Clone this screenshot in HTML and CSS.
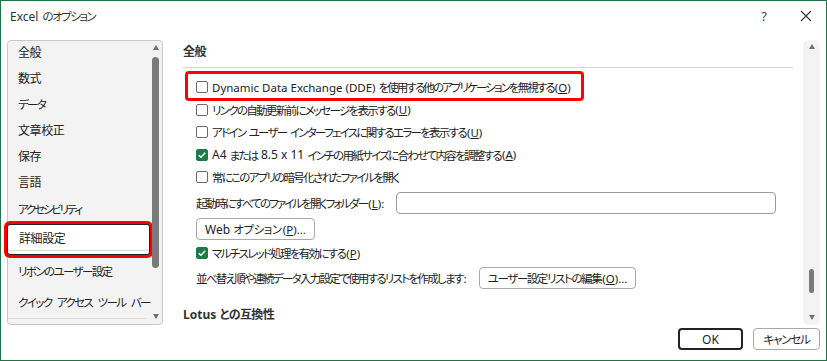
FILE: index.html
```html
<!DOCTYPE html>
<html lang="ja">
<head>
  <meta charset="UTF-8" />
  <title>Excel のオプション</title>
  <link rel="stylesheet" href="styles.css">
</head>
<body>
  <div class="dialog">
    <header class="titlebar">
      <span class="title"><span class="lat">Excel </span>のオプション</span>
      <div class="title-controls">
        <span class="help">?</span>
        <svg class="close" width="12" height="12" viewBox="0 0 12 12"><path d="M1 1L11 11M11 1L1 11" stroke="#333" stroke-width="1.1" fill="none"/></svg>
      </div>
    </header>

    <div class="main">
      <nav class="nav">
        <ul class="nav-list">
          <li class="nav-item">全般</li>
          <li class="nav-item">数式</li>
          <li class="nav-item kana">データ</li>
          <li class="nav-item">文章校正</li>
          <li class="nav-item">保存</li>
          <li class="nav-item">言語</li>
          <li class="nav-item kana tight">アクセシビリティ</li>
          <li class="nav-item selected">詳細設定</li>
          <li class="nav-item kana tall">リボンのユーザー設定</li>
          <li class="nav-item kana short last">クイック アクセス ツール バー</li>
        </ul>
        <div class="vscroll nav-scroll">
          <span class="arrow up"></span>
          <span class="thumb"></span>
          <span class="arrow down"></span>
        </div>
      </nav>

      <section class="pane">
        <div class="pane-body">
          <h2 class="section-title">全般</h2>
          <div class="options">
            <label class="row marked"><span class="check"></span><span class="lat">Dynamic Data Exchange (DDE) </span>を使用する他のアプリケーションを無視する<span class="key">(<u>O</u>)</span></label>
            <label class="row"><span class="check"></span>リンクの自動更新前にメッセージを表示する<span class="key">(<u>U</u>)</span></label>
            <label class="row"><span class="check"></span>アドイン ユーザー インターフェイスに関するエラーを表示する<span class="key">(<u>U</u>)</span></label>
            <label class="row"><span class="check on"></span><span class="lat">A4 </span>または <span class="lat">8.5 x 11 </span>インチの用紙サイズに合わせて内容を調整する<span class="key">(<u>A</u>)</span></label>
            <label class="row"><span class="check"></span>常にこのアプリの暗号化されたファイルを開く</label>
            <div class="row folder-row">
              <span class="field-label">起動時にすべてのファイルを開くフォルダー<span class="key">(<u>L</u>):</span></span>
              <span class="textbox"></span>
            </div>
            <div class="row button-row">
              <button class="btn web-btn"><span class="lat">Web </span>オプション<span class="key">(<u>P</u>)...</span></button>
            </div>
            <label class="row multi-row"><span class="check on"></span>マルチスレッド処理を有効にする<span class="key">(<u>P</u>)</span></label>
            <div class="row list-row">
              <span class="field-label">並べ替え順や連続データ入力設定で使用するリストを作成します<span class="key">:</span></span>
              <button class="btn list-btn">ユーザー設定リストの編集<span class="key">(<u>O</u>)...</span></button>
            </div>
          </div>
          <h2 class="section-title next"><span class="lat">Lotus </span>との互換性</h2>
        </div>
        <div class="vscroll pane-scroll">
          <span class="arrow up"></span>
          <span class="thumb"></span>
          <span class="arrow down"></span>
        </div>
      </section>
    </div>

    <footer class="actions">
      <button class="btn btn-default">OK</button>
      <button class="btn btn-cancel">キャンセル</button>
    </footer>
  </div>
</body>
</html>
```

FILE: styles.css
```css
body {
  margin: 0;
  background: #fff;
  font-family: 'Noto Sans', 'Noto Sans CJK JP', sans-serif;
  font-size: 12px;
  color: #222;
  font-feature-settings: "palt";
}
.lat {
  letter-spacing: 0;
  word-spacing: 0;
  font-size: 12px;
}
.key {
  letter-spacing: 0;
  word-spacing: 0;
  font-size: 11.5px;
  margin-left: 1px;
}
.dialog {
  width: 827px;
  height: 361px;
  box-sizing: border-box;
  border: 1px solid #217346;
  background: #fff;
  display: flex;
  flex-direction: column;
}
.titlebar {
  height: 30px;
  display: flex;
  align-items: center;
  justify-content: space-between;
  padding: 0 14px 0 9px;
}
.title {
  font-size: 11.5px;
  letter-spacing: -1.5px;
  color: #333;
  white-space: pre;
}
.title .lat {
  word-spacing: 1px;
}
.title-controls {
  display: flex;
  align-items: center;
  gap: 33px;
}
.help {
  font-size: 13px;
  color: #444;
}
.main {
  margin-top: 9px;
  height: 285px;
  display: flex;
}

/* left category list */
.nav {
  margin-left: 6px;
  width: 156px;
  box-sizing: border-box;
  border: 1px solid #c8c8c8;
  border-radius: 4px;
  background: #f3f3f3;
  display: flex;
}
.nav-list {
  list-style: none;
  margin: -1.5px 0 0;
  padding: 0;
  flex: 1;
  min-width: 0;
}
.nav-item {
  height: 26.2px;
  line-height: 26.2px;
  padding-left: 10px;
  white-space: nowrap;
  font-size: 12px;
  letter-spacing: -0.4px;
}
.nav-item.kana {
  font-size: 11.5px;
  letter-spacing: -1.6px;
  word-spacing: 4px;
}
.nav-item.tight {
  letter-spacing: -2.2px;
}
.nav-item.selected {
  height: 29px;
  line-height: 28px;
  margin: 1px 0 1px -1px;
  padding-left: 11px;
  background: #fff;
  border: 1px solid #222;
  border-radius: 3px;
  box-shadow: 0 0 0 3px #f00, inset 0 -3px 0 #fff, inset 0 -4px 0 #d8d8d8;
}
.nav-item.tall {
  height: 32px;
  line-height: 32px;
}
.nav-item.short {
  height: 30px;
  line-height: 30px;
}
.nav-item.last {
  border-bottom: 1px solid #dcdcdc;
  margin-right: 4px;
}

/* scrollbars */
.vscroll {
  display: flex;
  flex-direction: column;
  align-items: center;
}
.nav-scroll {
  width: 11px;
  padding-right: 1px;
}
.arrow {
  width: 0;
  height: 0;
  border-left: 3.5px solid transparent;
  border-right: 3.5px solid transparent;
}
.arrow.up {
  margin-top: 4px;
  border-bottom: 5px solid #707070;
}
.arrow.down {
  margin-top: auto;
  margin-bottom: 5px;
  border-top: 5px solid #707070;
}
.nav-scroll .thumb {
  margin-top: 7px;
  width: 7px;
  height: 211px;
  border-radius: 4px;
  background: #7a7a7a;
}
.pane-scroll {
  width: 17px;
  background: #f3f3f3;
  border-radius: 6px;
}
.pane-scroll .thumb {
  margin-top: auto;
  margin-bottom: 22px;
  width: 5px;
  height: 24px;
  border-radius: 3px;
  background: #7a7a7a;
}
.pane-scroll .arrow.down {
  margin-top: 0;
}

/* right options pane */
.pane {
  margin-left: 12px;
  margin-right: 6px;
  flex: 1;
  display: flex;
}
.pane-body {
  flex: 1;
  padding-left: 8px;
  padding-right: 10px;
}
.section-title {
  margin: 0;
  padding-top: 5px;
  line-height: 14px;
  font-size: 12px;
  font-weight: bold;
  letter-spacing: -0.6px;
  color: #333;
}
.section-title:first-child {
  padding-bottom: 8px;
  border-bottom: 1px solid #d4d4d4;
}
.section-title.next {
  margin-top: 12.5px;
}
.options {
  margin-top: 8px;
  padding-left: 13px;
}
.row {
  height: 22.5px;
  display: flex;
  align-items: center;
  white-space: pre;
  color: #222;
  font-size: 11.5px;
  letter-spacing: -1.7px;
  word-spacing: 2px;
}
.row.marked {
  position: relative;
  letter-spacing: -1.9px;
}
.row.marked .lat {
  font-size: 11.5px;
}
.row.marked::after {
  content: "";
  position: absolute;
  left: -11px;
  top: -5px;
  width: 399px;
  height: 30px;
  box-sizing: border-box;
  border: 3px solid #f00;
  border-radius: 4px;
}
.check {
  width: 12px;
  height: 12px;
  box-sizing: border-box;
  border: 1px solid #6a6a6a;
  border-radius: 2px;
  margin-right: 4px;
  flex: none;
  background: #fff;
}
.check.on {
  border-color: #1e7a46;
  background: #1e7a46 url("data:image/svg+xml,%3Csvg xmlns='http://www.w3.org/2000/svg' viewBox='0 0 12 12'%3E%3Cpath d='M2.8 6.2L5 8.3L9.2 3.8' stroke='white' stroke-width='1.5' fill='none'/%3E%3C/svg%3E") center/12px no-repeat;
}
.folder-row {
  height: 29px;
  letter-spacing: -1.9px;
}
.field-label {
  margin-right: 12px;
}
.textbox {
  width: 380px;
  height: 22px;
  box-sizing: border-box;
  border: 1px solid #9a9a9a;
  border-radius: 4px;
}
.button-row {
  height: 23px;
}
.multi-row {
  height: 25px;
}
.list-row {
  height: 25px;
}
.btn {
  height: 22px;
  box-sizing: border-box;
  padding: 0 8px;
  border: 1px solid #a8a8a8;
  border-radius: 4px;
  background: #fff;
  font-family: inherit;
  font-size: 11.5px;
  font-feature-settings: "palt";
  color: #222;
  letter-spacing: -1.4px;
  white-space: pre;
}
.web-btn {
  min-width: 101px;
  letter-spacing: -0.4px;
}
.list-btn {
  min-width: 155px;
}

/* dialog buttons */
.actions {
  margin-top: 3px;
  display: flex;
  justify-content: flex-end;
  gap: 10px;
  padding-right: 6px;
}
.btn-default {
  width: 65px;
  border: 2px solid #222;
  font-size: 12px;
  letter-spacing: 0;
}
.btn-cancel {
  width: 67px;
  padding: 0;
  letter-spacing: -1.2px;
}
```
